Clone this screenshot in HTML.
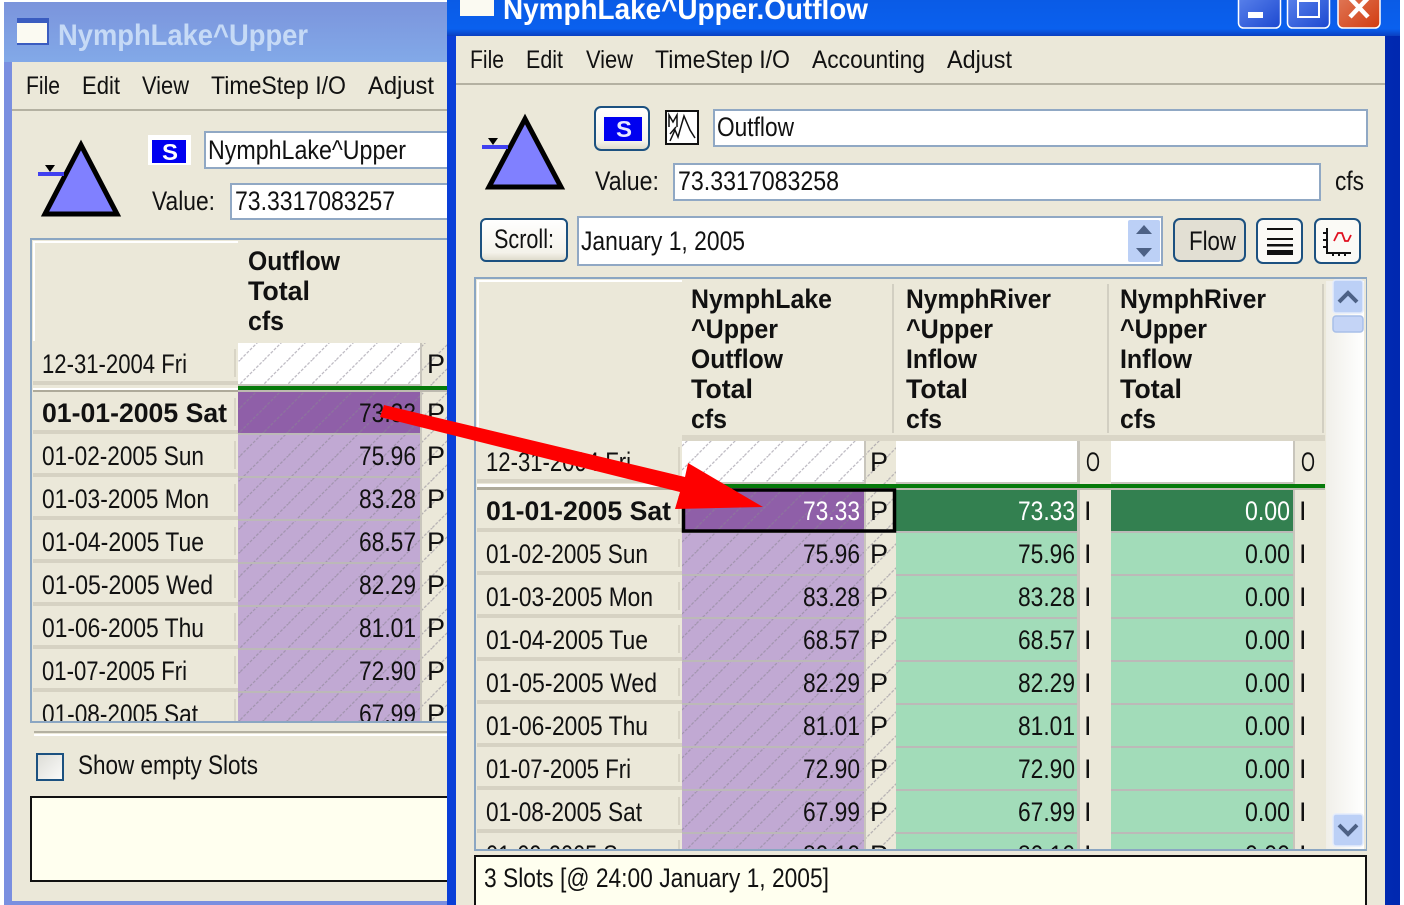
<!DOCTYPE html>
<html><head><meta charset="utf-8"><title>NymphLake^Upper.Outflow</title>
<style>
html,body{margin:0;padding:0;background:#fff;width:1404px;height:905px;overflow:hidden}
svg{display:block}
text{font-family:"Liberation Sans",sans-serif;fill:#111;white-space:pre}
.r{font-size:27px}
.m{font-size:25px}
.b{font-size:27px;font-weight:bold}
.t{font-size:30px;font-weight:bold}
</style></head><body>
<svg width="1404" height="905" viewBox="0 0 1404 905" xmlns="http://www.w3.org/2000/svg">
<defs>
<pattern id="h" patternUnits="userSpaceOnUse" width="24" height="24"><path d="M-6 30L30 -6M-30 30L6 -6M18 30L30 18" stroke="#8a8494" stroke-opacity=".55" stroke-width="1.3" stroke-dasharray="3 1.5"/></pattern>
<linearGradient id="lt" x1="0" y1="0" x2="0" y2="1"><stop offset="0" stop-color="#7b94dc"/><stop offset="1" stop-color="#82a9e8"/></linearGradient>
<linearGradient id="rt" x1="0" y1="0" x2="0" y2="1"><stop offset="0" stop-color="#0a5be6"/><stop offset=".8" stop-color="#0a60ee"/><stop offset="1" stop-color="#0a3fc0"/></linearGradient>
<linearGradient id="rb" x1="0" y1="0" x2="1" y2="0"><stop offset="0" stop-color="#0a3fd8"/><stop offset=".5" stop-color="#0a50e0"/><stop offset="1" stop-color="#0028b0"/></linearGradient>
<linearGradient id="min" x1="0" y1="0" x2="1" y2="1"><stop offset="0" stop-color="#5c84ec"/><stop offset="1" stop-color="#1c48d0"/></linearGradient>
<linearGradient id="cl" x1="0" y1="0" x2="1" y2="1"><stop offset="0" stop-color="#e07a5a"/><stop offset="1" stop-color="#d23c10"/></linearGradient>
<linearGradient id="sb" x1="0" y1="0" x2="1" y2="0"><stop offset="0" stop-color="#f0efe9"/><stop offset="1" stop-color="#fff"/></linearGradient>
<linearGradient id="btn" x1="0" y1="0" x2="0" y2="1"><stop offset="0" stop-color="#fff"/><stop offset=".8" stop-color="#f4f2ea"/><stop offset="1" stop-color="#dcd8c8"/></linearGradient>
<linearGradient id="chk" x1="0" y1="0" x2="1" y2="1"><stop offset="0" stop-color="#dcdcd6"/><stop offset="1" stop-color="#fbfbfa"/></linearGradient>
<clipPath id="cl1"><rect x="32" y="240" width="416" height="481"/></clipPath>
<clipPath id="cl2"><rect x="476" y="279" width="890" height="570"/></clipPath>
<g id="dl"><rect x="33" y="0" width="205" height="43" fill="#ebe8d9"/><rect x="33" y="38" width="205" height="4" fill="#d6d2c3"/><rect x="234" y="6" width="2" height="28" fill="#d8d4c5"/></g>
<g id="dr"><rect x="477" y="0" width="205" height="43" fill="#ebe8d9"/><rect x="477" y="38" width="205" height="4" fill="#d6d2c3"/><rect x="678" y="6" width="2" height="28" fill="#d8d4c5"/></g>
</defs>

<!-- LEFT WINDOW -->
<rect x="4" y="2" width="450" height="903" fill="#7a8fe0"/>
<rect x="4" y="2" width="450" height="60" fill="url(#lt)"/>
<rect x="12" y="62" width="440" height="839" fill="#ebe8d9"/>
<rect x="17" y="18" width="32" height="27" fill="#3a5cc0"/><rect x="17" y="23" width="30" height="20" fill="#fbfaf2"/>
<text class="t" x="58" y="45" textLength="250" lengthAdjust="spacingAndGlyphs" style="fill:#c6daf6">NymphLake^Upper</text>
<text class="m" x="26" y="94" textLength="34" lengthAdjust="spacingAndGlyphs">File</text>
<text class="m" x="82" y="94" textLength="38" lengthAdjust="spacingAndGlyphs">Edit</text>
<text class="m" x="142" y="94" textLength="47" lengthAdjust="spacingAndGlyphs">View</text>
<text class="m" x="211" y="94" textLength="135" lengthAdjust="spacingAndGlyphs">TimeStep I/O</text>
<text class="m" x="368" y="94" textLength="66" lengthAdjust="spacingAndGlyphs">Adjust</text>
<rect x="12" y="109" width="440" height="2" fill="#b4b1a2"/>
<path d="M81 145L45 214H117Z" fill="#8080ff" stroke="#000" stroke-width="5" stroke-linejoin="miter"/>
<rect x="38" y="172" width="26" height="4" fill="#4040f0"/><path d="M45 165H55L50 172Z" fill="#000"/>
<rect x="148" y="135" width="43" height="30" fill="#fff"/><rect x="152" y="140" width="34" height="23" fill="#0000f0"/>
<text x="162" y="160" style="font-size:23px;font-weight:bold;fill:#fff" textLength="16" lengthAdjust="spacingAndGlyphs">S</text>
<rect x="205" y="132" width="250" height="36" fill="#fff" stroke="#90a8c4" stroke-width="2"/>
<text class="r" x="208" y="159" textLength="198" lengthAdjust="spacingAndGlyphs">NymphLake^Upper</text>
<text class="r" x="152" y="210" textLength="63" lengthAdjust="spacingAndGlyphs">Value:</text>
<rect x="231" y="184" width="224" height="35" fill="#fff" stroke="#90a8c4" stroke-width="2"/>
<text class="r" x="235" y="210" textLength="160" lengthAdjust="spacingAndGlyphs">73.3317083257</text>
<rect x="31" y="239" width="425" height="483" fill="#ebe8d9" stroke="#8ba6c2" stroke-width="2"/>
<rect x="33" y="241" width="205" height="2" fill="#fff"/><rect x="33" y="241" width="2" height="100" fill="#fff"/>
<text class="b" x="248" y="270" textLength="92" lengthAdjust="spacingAndGlyphs">Outflow</text>
<text class="b" x="248" y="300" textLength="62" lengthAdjust="spacingAndGlyphs">Total</text>
<text class="b" x="248" y="330" textLength="36" lengthAdjust="spacingAndGlyphs">cfs</text>
<g clip-path="url(#cl1)">
<use href="#dl" y="343"/>
<rect x="33" y="386" width="205" height="2" fill="#ebe8d9"/><rect x="33" y="388" width="205" height="2" fill="#fff"/><rect x="33" y="390" width="205" height="2" fill="#aeaa9a"/>
<use href="#dl" y="392"/><use href="#dl" y="435"/><use href="#dl" y="478"/><use href="#dl" y="521"/><use href="#dl" y="564"/><use href="#dl" y="607"/><use href="#dl" y="650"/><use href="#dl" y="693"/>
<rect x="238" y="343" width="182" height="41" fill="#fff"/>
<rect x="238" y="392" width="182" height="330" fill="#c1a9d3"/>
<rect x="238" y="392" width="182" height="41" fill="#8f5fa8"/>
<rect x="422" y="343" width="30" height="380" fill="#ebe8d9"/>
<rect x="238" y="343" width="214" height="380" fill="url(#h)"/>
<rect x="238" y="384" width="184" height="2" fill="#c8c5bc"/>
<rect x="420" y="343" width="2" height="380" fill="#c8c5bc"/>
<rect x="238" y="386" width="214" height="4" fill="#067a0a"/>
<rect x="238" y="390" width="214" height="2" fill="#bdbab0"/>
<rect x="238" y="433" width="182" height="2" fill="#bcb9b8"/><rect x="238" y="476" width="182" height="2" fill="#bcb9b8"/><rect x="238" y="519" width="182" height="2" fill="#bcb9b8"/><rect x="238" y="562" width="182" height="2" fill="#bcb9b8"/><rect x="238" y="605" width="182" height="2" fill="#bcb9b8"/><rect x="238" y="648" width="182" height="2" fill="#bcb9b8"/><rect x="238" y="691" width="182" height="2" fill="#bcb9b8"/>
<g transform="translate(0 -1)">
<text class="r" x="42" y="374" textLength="145" lengthAdjust="spacingAndGlyphs">12-31-2004 Fri</text>
<text class="b" x="42" y="423" textLength="185" lengthAdjust="spacingAndGlyphs">01-01-2005 Sat</text>
<text class="r" x="42" y="466" textLength="162" lengthAdjust="spacingAndGlyphs">01-02-2005 Sun</text>
<text class="r" x="42" y="509" textLength="167" lengthAdjust="spacingAndGlyphs">01-03-2005 Mon</text>
<text class="r" x="42" y="552" textLength="162" lengthAdjust="spacingAndGlyphs">01-04-2005 Tue</text>
<text class="r" x="42" y="595" textLength="171" lengthAdjust="spacingAndGlyphs">01-05-2005 Wed</text>
<text class="r" x="42" y="638" textLength="162" lengthAdjust="spacingAndGlyphs">01-06-2005 Thu</text>
<text class="r" x="42" y="681" textLength="145" lengthAdjust="spacingAndGlyphs">01-07-2005 Fri</text>
<text class="r" x="42" y="724" textLength="156" lengthAdjust="spacingAndGlyphs">01-08-2005 Sat</text>
<text class="r" x="359" y="423" textLength="57" lengthAdjust="spacingAndGlyphs">73.33</text>
<text class="r" x="359" y="466" textLength="57" lengthAdjust="spacingAndGlyphs">75.96</text>
<text class="r" x="359" y="509" textLength="57" lengthAdjust="spacingAndGlyphs">83.28</text>
<text class="r" x="359" y="552" textLength="57" lengthAdjust="spacingAndGlyphs">68.57</text>
<text class="r" x="359" y="595" textLength="57" lengthAdjust="spacingAndGlyphs">82.29</text>
<text class="r" x="359" y="638" textLength="57" lengthAdjust="spacingAndGlyphs">81.01</text>
<text class="r" x="359" y="681" textLength="57" lengthAdjust="spacingAndGlyphs">72.90</text>
<text class="r" x="359" y="724" textLength="57" lengthAdjust="spacingAndGlyphs">67.99</text>
<text class="r" x="427" y="374">P</text><text class="r" x="427" y="423">P</text><text class="r" x="427" y="466">P</text><text class="r" x="427" y="509">P</text><text class="r" x="427" y="552">P</text><text class="r" x="427" y="595">P</text><text class="r" x="427" y="638">P</text><text class="r" x="427" y="681">P</text><text class="r" x="427" y="724">P</text>
</g>
</g>
<rect x="34" y="731" width="420" height="2" fill="#b4b1a2"/><rect x="34" y="734" width="420" height="2" fill="#fff"/>
<rect x="37" y="754" width="26" height="26" fill="url(#chk)" stroke="#1c5180" stroke-width="2"/>
<text class="r" x="78" y="774" textLength="180" lengthAdjust="spacingAndGlyphs">Show empty Slots</text>
<rect x="31" y="797" width="425" height="84" fill="#ffffef" stroke="#111" stroke-width="2"/>

<!-- RIGHT WINDOW -->
<rect x="447" y="0" width="953" height="905" fill="url(#rb)"/>
<rect x="447" y="0" width="953" height="36" fill="url(#rt)"/>
<rect x="456" y="36" width="929" height="869" fill="#ebe8d9"/>
<rect x="460" y="-2" width="34" height="18" fill="#fbfaf2"/>
<text class="t" x="503" y="19" textLength="365" lengthAdjust="spacingAndGlyphs" style="fill:#fff">NymphLake^Upper.Outflow</text>
<rect x="1238.500" y="-6" width="42" height="34" rx="5" fill="url(#min)" stroke="#fff" stroke-width="1.500"/>
<rect x="1248" y="12" width="15" height="6" fill="#fff"/>
<rect x="1287.500" y="-6" width="42" height="34" rx="5" fill="url(#min)" stroke="#fff" stroke-width="1.500"/>
<rect x="1298" y="1" width="21" height="16" fill="none" stroke="#fff" stroke-width="2"/>
<rect x="1338" y="-6" width="42" height="34" rx="5" fill="url(#cl)" stroke="#fff" stroke-width="1.500"/>
<path d="M1350 -2L1368 17M1368 -2L1350 17" stroke="#fff" stroke-width="4.500"/>
<text class="m" x="470" y="68" textLength="34" lengthAdjust="spacingAndGlyphs">File</text>
<text class="m" x="526" y="68" textLength="37" lengthAdjust="spacingAndGlyphs">Edit</text>
<text class="m" x="586" y="68" textLength="47" lengthAdjust="spacingAndGlyphs">View</text>
<text class="m" x="655" y="68" textLength="135" lengthAdjust="spacingAndGlyphs">TimeStep I/O</text>
<text class="m" x="812" y="68" textLength="113" lengthAdjust="spacingAndGlyphs">Accounting</text>
<text class="m" x="947" y="68" textLength="65" lengthAdjust="spacingAndGlyphs">Adjust</text>
<rect x="456" y="83" width="929" height="2" fill="#b4b1a2"/>
<path d="M525 119L489 187H561Z" fill="#8080ff" stroke="#000" stroke-width="5"/>
<rect x="482" y="145" width="26" height="4" fill="#4040f0"/><path d="M488 138H498L493 145Z" fill="#000"/>
<rect x="595" y="107" width="54" height="43" rx="6" fill="url(#btn)" stroke="#1c5180" stroke-width="2"/>
<rect x="604" y="117" width="38" height="24" fill="#0000f0"/>
<text x="616" y="137" style="font-size:23px;font-weight:bold;fill:#e8e8ff" textLength="16" lengthAdjust="spacingAndGlyphs">S</text>
<rect x="666" y="111" width="32" height="33" fill="#fff" stroke="#111" stroke-width="2"/>
<path d="M669 127V115L673 122L677 115V127M670 141L675 130L678 137L684 116L690 130L695 138M670 134L676 127" fill="none" stroke="#111" stroke-width="1.500"/>
<rect x="714" y="110" width="653" height="36" fill="#fff" stroke="#90a8c4" stroke-width="2"/>
<text class="r" x="717" y="136" textLength="77" lengthAdjust="spacingAndGlyphs">Outflow</text>
<text class="r" x="595" y="190" textLength="64" lengthAdjust="spacingAndGlyphs">Value:</text>
<rect x="674" y="164" width="646" height="36" fill="#fff" stroke="#90a8c4" stroke-width="2"/>
<text class="r" x="678" y="190" textLength="161" lengthAdjust="spacingAndGlyphs">73.3317083258</text>
<text class="r" x="1335" y="190" textLength="29" lengthAdjust="spacingAndGlyphs">cfs</text>
<rect x="481" y="219" width="86" height="42" rx="5" fill="url(#btn)" stroke="#1c5180" stroke-width="2"/>
<text class="r" x="494" y="248" textLength="60" lengthAdjust="spacingAndGlyphs">Scroll:</text>
<rect x="578" y="217" width="584" height="48" fill="#fff" stroke="#90a8c4" stroke-width="2"/>
<text class="r" x="581" y="250" textLength="164" lengthAdjust="spacingAndGlyphs">January 1, 2005</text>
<rect x="1128" y="220" width="32" height="42" rx="2" fill="#bcd0f6"/>
<path d="M1144 225L1152 234H1136ZM1144 257L1136 248H1152Z" fill="#4d6185"/>
<rect x="1174" y="219" width="71" height="42" rx="6" fill="#e2dfd3" stroke="#1c5180" stroke-width="2"/>
<text class="r" x="1189" y="250" textLength="47" lengthAdjust="spacingAndGlyphs">Flow</text>
<rect x="1257" y="219" width="45" height="44" rx="6" fill="#fbfaf6" stroke="#1c5180" stroke-width="2"/>
<rect x="1267" y="228" width="26" height="2" fill="#111"/><rect x="1267" y="238" width="26" height="2" fill="#111"/><rect x="1267" y="244" width="26" height="2.500" fill="#111"/><rect x="1267" y="250" width="26" height="5" fill="#111"/>
<rect x="1315" y="219" width="45" height="44" rx="6" fill="#fbfaf6" stroke="#1c5180" stroke-width="2"/>
<path d="M1327 228V253H1351M1323 233H1327M1323 240H1327M1323 247H1327M1333 253V256M1339 253V256M1345 253V256" fill="none" stroke="#111" stroke-width="2"/>
<path d="M1334 241L1338 233L1342 233L1345 241L1348 241L1351 235" fill="none" stroke="#e01020" stroke-width="1.800"/>

<!-- RIGHT TABLE -->
<rect x="475" y="278" width="891" height="572" fill="#ebe8d9" stroke="#8ba6c2" stroke-width="2"/>
<rect x="477" y="280" width="205" height="2" fill="#fff"/><rect x="477" y="280" width="2" height="150" fill="#fff"/>
<rect x="892" y="284" width="2" height="149" fill="#d2cfc2"/><rect x="1107" y="284" width="2" height="149" fill="#d2cfc2"/><rect x="1322" y="284" width="2" height="149" fill="#d2cfc2"/>
<text class="b" x="691" y="308" textLength="141" lengthAdjust="spacingAndGlyphs">NymphLake</text>
<text class="b" x="691" y="338" textLength="87" lengthAdjust="spacingAndGlyphs">^Upper</text>
<text class="b" x="691" y="368" textLength="92" lengthAdjust="spacingAndGlyphs">Outflow</text>
<text class="b" x="691" y="398" textLength="62" lengthAdjust="spacingAndGlyphs">Total</text>
<text class="b" x="691" y="428" textLength="36" lengthAdjust="spacingAndGlyphs">cfs</text>
<text class="b" x="906" y="308" textLength="145" lengthAdjust="spacingAndGlyphs">NymphRiver</text>
<text class="b" x="906" y="338" textLength="87" lengthAdjust="spacingAndGlyphs">^Upper</text>
<text class="b" x="906" y="368" textLength="71" lengthAdjust="spacingAndGlyphs">Inflow</text>
<text class="b" x="906" y="398" textLength="62" lengthAdjust="spacingAndGlyphs">Total</text>
<text class="b" x="906" y="428" textLength="36" lengthAdjust="spacingAndGlyphs">cfs</text>
<text class="b" x="1120" y="308" textLength="146" lengthAdjust="spacingAndGlyphs">NymphRiver</text>
<text class="b" x="1120" y="338" textLength="87" lengthAdjust="spacingAndGlyphs">^Upper</text>
<text class="b" x="1120" y="368" textLength="72" lengthAdjust="spacingAndGlyphs">Inflow</text>
<text class="b" x="1120" y="398" textLength="62" lengthAdjust="spacingAndGlyphs">Total</text>
<text class="b" x="1120" y="428" textLength="36" lengthAdjust="spacingAndGlyphs">cfs</text>
<g clip-path="url(#cl2)">
<rect x="682" y="435" width="643" height="6" fill="#dad6c7"/>
<use href="#dr" y="441"/>
<rect x="477" y="484" width="205" height="3" fill="#fff"/><rect x="477" y="487" width="205" height="3" fill="#aeaa9a"/>
<use href="#dr" y="490"/><use href="#dr" y="533"/><use href="#dr" y="576"/><use href="#dr" y="619"/><use href="#dr" y="662"/><use href="#dr" y="705"/><use href="#dr" y="748"/><use href="#dr" y="791"/><use href="#dr" y="834"/>
<rect x="682" y="441" width="182" height="41" fill="#fff"/>
<rect x="896" y="441" width="181" height="41" fill="#fff"/>
<rect x="1111" y="441" width="182" height="41" fill="#fff"/>
<rect x="682" y="490" width="182" height="360" fill="#c1a9d3"/>
<rect x="682" y="490" width="182" height="41" fill="#8f5fa8"/>
<rect x="896" y="490" width="181" height="360" fill="#a2dcb9"/>
<rect x="1111" y="490" width="182" height="360" fill="#a2dcb9"/>
<rect x="896" y="490" width="181" height="41" fill="#338050"/>
<rect x="1111" y="490" width="182" height="41" fill="#338050"/>
<rect x="682" y="441" width="214" height="410" fill="url(#h)"/>
<rect x="682" y="482" width="184" height="2" fill="#c8c5bc"/><rect x="896" y="482" width="183" height="2" fill="#c8c5bc"/><rect x="1111" y="482" width="184" height="2" fill="#c8c5bc"/>
<rect x="864" y="441" width="2" height="410" fill="#c8c5bc"/><rect x="1077" y="441" width="3" height="410" fill="#c8c5bc"/><rect x="1293" y="441" width="2" height="410" fill="#c8c5bc"/>
<rect x="682" y="484" width="643" height="4" fill="#067a0a"/>
<rect x="682" y="488" width="643" height="2" fill="#bdbab0"/>
<path d="M682 532H864M896 532H1077M1111 532H1293M682 575H864M896 575H1077M1111 575H1293M682 618H864M896 618H1077M1111 618H1293M682 661H864M896 661H1077M1111 661H1293M682 704H864M896 704H1077M1111 704H1293M682 747H864M896 747H1077M1111 747H1293M682 790H864M896 790H1077M1111 790H1293M682 833H864M896 833H1077M1111 833H1293" stroke="#bcb9b8" stroke-width="2"/>
<rect x="1325" y="279" width="41" height="571" fill="#ebe8d9"/>
<rect x="1326" y="281" width="38" height="568" fill="url(#sb)"/>
<rect x="683.500" y="490" width="211" height="41" fill="none" stroke="#000" stroke-width="3.500"/>
<g transform="translate(0 -1)">
<text class="r" x="486" y="472" textLength="145" lengthAdjust="spacingAndGlyphs">12-31-2004 Fri</text>
<text class="b" x="486" y="521" textLength="185" lengthAdjust="spacingAndGlyphs">01-01-2005 Sat</text>
<text class="r" x="486" y="564" textLength="162" lengthAdjust="spacingAndGlyphs">01-02-2005 Sun</text>
<text class="r" x="486" y="607" textLength="167" lengthAdjust="spacingAndGlyphs">01-03-2005 Mon</text>
<text class="r" x="486" y="650" textLength="162" lengthAdjust="spacingAndGlyphs">01-04-2005 Tue</text>
<text class="r" x="486" y="693" textLength="171" lengthAdjust="spacingAndGlyphs">01-05-2005 Wed</text>
<text class="r" x="486" y="736" textLength="162" lengthAdjust="spacingAndGlyphs">01-06-2005 Thu</text>
<text class="r" x="486" y="779" textLength="145" lengthAdjust="spacingAndGlyphs">01-07-2005 Fri</text>
<text class="r" x="486" y="822" textLength="156" lengthAdjust="spacingAndGlyphs">01-08-2005 Sat</text>
<text class="r" x="486" y="865" textLength="156" lengthAdjust="spacingAndGlyphs">01-09-2005 Sun</text>
<text class="r" x="803" y="521" textLength="57" lengthAdjust="spacingAndGlyphs" style="fill:#fff">73.33</text>
<text class="r" x="803" y="564" textLength="57" lengthAdjust="spacingAndGlyphs">75.96</text>
<text class="r" x="803" y="607" textLength="57" lengthAdjust="spacingAndGlyphs">83.28</text>
<text class="r" x="803" y="650" textLength="57" lengthAdjust="spacingAndGlyphs">68.57</text>
<text class="r" x="803" y="693" textLength="57" lengthAdjust="spacingAndGlyphs">82.29</text>
<text class="r" x="803" y="736" textLength="57" lengthAdjust="spacingAndGlyphs">81.01</text>
<text class="r" x="803" y="779" textLength="57" lengthAdjust="spacingAndGlyphs">72.90</text>
<text class="r" x="803" y="822" textLength="57" lengthAdjust="spacingAndGlyphs">67.99</text>
<text class="r" x="803" y="865" textLength="57" lengthAdjust="spacingAndGlyphs">80.10</text>
<text class="r" x="1018" y="521" textLength="57" lengthAdjust="spacingAndGlyphs" style="fill:#fff">73.33</text>
<text class="r" x="1018" y="564" textLength="57" lengthAdjust="spacingAndGlyphs">75.96</text>
<text class="r" x="1018" y="607" textLength="57" lengthAdjust="spacingAndGlyphs">83.28</text>
<text class="r" x="1018" y="650" textLength="57" lengthAdjust="spacingAndGlyphs">68.57</text>
<text class="r" x="1018" y="693" textLength="57" lengthAdjust="spacingAndGlyphs">82.29</text>
<text class="r" x="1018" y="736" textLength="57" lengthAdjust="spacingAndGlyphs">81.01</text>
<text class="r" x="1018" y="779" textLength="57" lengthAdjust="spacingAndGlyphs">72.90</text>
<text class="r" x="1018" y="822" textLength="57" lengthAdjust="spacingAndGlyphs">67.99</text>
<text class="r" x="1018" y="865" textLength="57" lengthAdjust="spacingAndGlyphs">80.10</text>
<text class="r" x="1245" y="521" textLength="45" lengthAdjust="spacingAndGlyphs" style="fill:#fff">0.00</text>
<text class="r" x="1245" y="564" textLength="45" lengthAdjust="spacingAndGlyphs">0.00</text>
<text class="r" x="1245" y="607" textLength="45" lengthAdjust="spacingAndGlyphs">0.00</text>
<text class="r" x="1245" y="650" textLength="45" lengthAdjust="spacingAndGlyphs">0.00</text>
<text class="r" x="1245" y="693" textLength="45" lengthAdjust="spacingAndGlyphs">0.00</text>
<text class="r" x="1245" y="736" textLength="45" lengthAdjust="spacingAndGlyphs">0.00</text>
<text class="r" x="1245" y="779" textLength="45" lengthAdjust="spacingAndGlyphs">0.00</text>
<text class="r" x="1245" y="822" textLength="45" lengthAdjust="spacingAndGlyphs">0.00</text>
<text class="r" x="1245" y="865" textLength="45" lengthAdjust="spacingAndGlyphs">0.00</text>
<text class="r" x="870" y="472">P</text><text class="r" x="870" y="521">P</text><text class="r" x="870" y="564">P</text><text class="r" x="870" y="607">P</text><text class="r" x="870" y="650">P</text><text class="r" x="870" y="693">P</text><text class="r" x="870" y="736">P</text><text class="r" x="870" y="779">P</text><text class="r" x="870" y="822">P</text><text class="r" x="870" y="865">P</text>
<text class="r" x="1086" y="472" textLength="14" lengthAdjust="spacingAndGlyphs">O</text><text class="r" x="1301" y="472" textLength="14" lengthAdjust="spacingAndGlyphs">O</text>
<text class="r" x="1084" y="521">I</text><text class="r" x="1084" y="564">I</text><text class="r" x="1084" y="607">I</text><text class="r" x="1084" y="650">I</text><text class="r" x="1084" y="693">I</text><text class="r" x="1084" y="736">I</text><text class="r" x="1084" y="779">I</text><text class="r" x="1084" y="822">I</text><text class="r" x="1084" y="865">I</text>
<text class="r" x="1299" y="521">I</text><text class="r" x="1299" y="564">I</text><text class="r" x="1299" y="607">I</text><text class="r" x="1299" y="650">I</text><text class="r" x="1299" y="693">I</text><text class="r" x="1299" y="736">I</text><text class="r" x="1299" y="779">I</text><text class="r" x="1299" y="822">I</text><text class="r" x="1299" y="865">I</text>
</g>
</g>
<rect x="1333" y="280" width="30" height="33" rx="3" fill="#bcd0f6" stroke="#e4ecfb" stroke-width="1.500"/>
<path d="M1339 302L1348 293L1357 302" fill="none" stroke="#4d6185" stroke-width="4"/>
<rect x="1333" y="316" width="30" height="16" rx="3" fill="#c4d4f6" stroke="#a8bfe8" stroke-width="1.500"/>
<rect x="1333" y="814" width="30" height="32" rx="3" fill="#bcd0f6" stroke="#e4ecfb" stroke-width="1.500"/>
<path d="M1339 825L1348 834L1357 825" fill="none" stroke="#4d6185" stroke-width="4"/>
<rect x="475" y="856" width="891" height="60" fill="#ffffef" stroke="#111" stroke-width="2"/>
<text class="r" x="484" y="887" textLength="345" lengthAdjust="spacingAndGlyphs">3 Slots [@ 24:00 January 1, 2005]</text>

<!-- ARROW -->
<path d="M384 405L685 477L688 463L763 507L675 509L680 492L380 417Z" fill="#fe0000"/>
</svg>
</body></html>
